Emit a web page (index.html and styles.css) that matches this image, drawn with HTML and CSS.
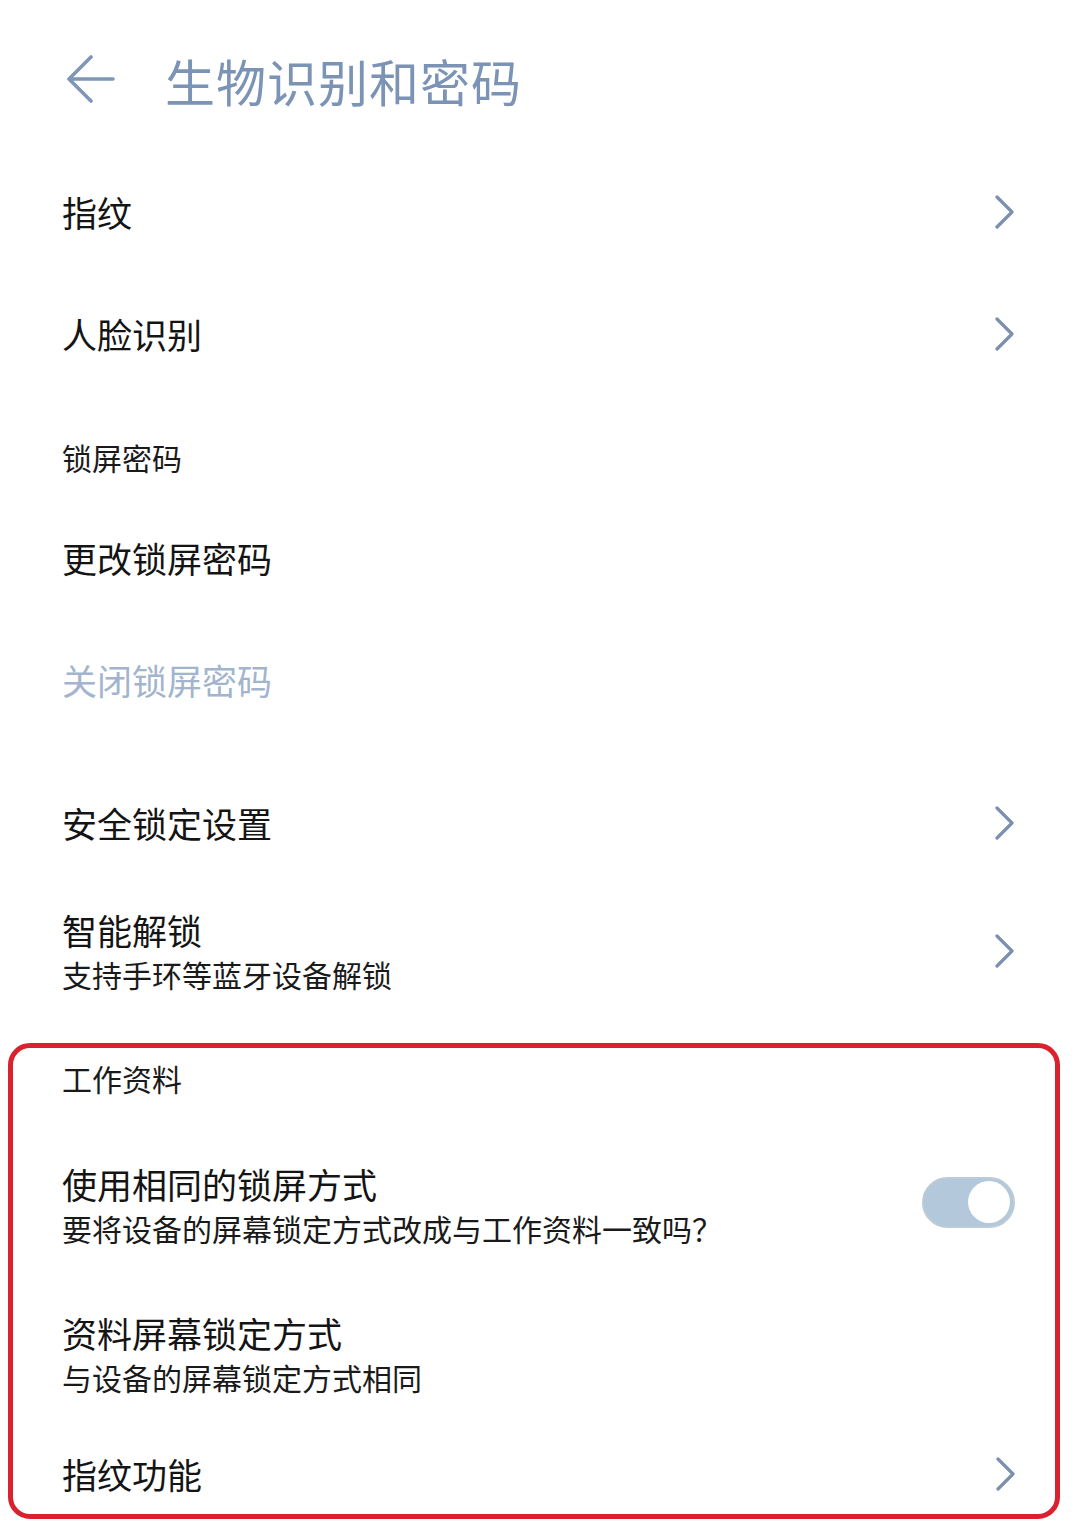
FILE: index.html
```html
<!DOCTYPE html>
<html lang="zh-CN">
<head>
<meta charset="utf-8">
<title>生物识别和密码</title>
<link rel="stylesheet" href="styles.css">
</head>
<body>
<div class="screen">
  <header class="appbar">
    <svg class="back" width="50" height="50" viewBox="0 0 50 50" aria-hidden="true">
      <path d="M3 24 H47 M25 2 L3 24 L25 46" fill="none" stroke="#7f96b8" stroke-width="3.6" stroke-linecap="round" stroke-linejoin="round"/>
    </svg>
    <h1 class="title">生物识别和密码</h1>
  </header>

  <div class="item h-fp">
    <span class="label">指纹</span>
    <svg class="chev" width="20" height="34" viewBox="0 0 20 34" aria-hidden="true"><path d="M3 2 L18 17 L3 32" fill="none" stroke="#7b8fae" stroke-width="3.2" stroke-linecap="round" stroke-linejoin="round"/></svg>
  </div>
  <div class="item h-face">
    <span class="label">人脸识别</span>
    <svg class="chev" width="20" height="34" viewBox="0 0 20 34" aria-hidden="true"><path d="M3 2 L18 17 L3 32" fill="none" stroke="#7b8fae" stroke-width="3.2" stroke-linecap="round" stroke-linejoin="round"/></svg>
  </div>
  <div class="item h-sec1">
    <span class="section">锁屏密码</span>
  </div>
  <div class="item h-change">
    <span class="label">更改锁屏密码</span>
  </div>
  <div class="item h-close">
    <span class="label disabled">关闭锁屏密码</span>
  </div>
  <div class="item h-safe">
    <span class="label">安全锁定设置</span>
    <svg class="chev" width="20" height="34" viewBox="0 0 20 34" aria-hidden="true"><path d="M3 2 L18 17 L3 32" fill="none" stroke="#7b8fae" stroke-width="3.2" stroke-linecap="round" stroke-linejoin="round"/></svg>
  </div>
  <div class="item h-smart">
    <div class="texts">
      <span class="label">智能解锁</span>
      <span class="sub">支持手环等蓝牙设备解锁</span>
    </div>
    <svg class="chev" width="20" height="34" viewBox="0 0 20 34" aria-hidden="true"><path d="M3 2 L18 17 L3 32" fill="none" stroke="#7b8fae" stroke-width="3.2" stroke-linecap="round" stroke-linejoin="round"/></svg>
  </div>

  <div class="work-box">
    <div class="item in h-sec2">
      <span class="section">工作资料</span>
    </div>
    <div class="item in h-same">
      <div class="texts">
        <span class="label">使用相同的锁屏方式</span>
        <span class="sub">要将设备的屏幕锁定方式改成与工作资料一致吗？</span>
      </div>
      <div class="toggle"><div class="knob"></div></div>
    </div>
    <div class="item in h-profile">
      <div class="texts">
        <span class="label">资料屏幕锁定方式</span>
        <span class="sub">与设备的屏幕锁定方式相同</span>
      </div>
    </div>
    <div class="item in h-fpf">
      <span class="label">指纹功能</span>
      <svg class="chev" width="20" height="34" viewBox="0 0 20 34" aria-hidden="true"><path d="M3 2 L18 17 L3 32" fill="none" stroke="#7b8fae" stroke-width="3.2" stroke-linecap="round" stroke-linejoin="round"/></svg>
    </div>
  </div>
</div>
</body>
</html>
```

FILE: styles.css
```css
html, body {
  margin: 0;
  padding: 0;
  background: #ffffff;
}

body {
  font-family: "Noto Sans CJK SC", "Noto Sans", sans-serif;
  color: #141414;
}

.screen {
  width: 1080px;
  height: 1536px;
  overflow: hidden;
}

.appbar {
  height: 160px;
  display: flex;
  align-items: center;
  padding-left: 66px;
  gap: 49px;
}

.back {
  display: block;
  flex: none;
}

.title {
  margin: 0;
  font-size: 50px;
  font-weight: 400;
  line-height: 60px;
  color: #7b93b5;
  letter-spacing: 1px;
}

.item {
  display: flex;
  align-items: center;
  justify-content: space-between;
  padding: 0 66px 0 62px;
  box-sizing: border-box;
}

.item.in {
  padding: 0 40px 0 49px;
}

.texts {
  display: flex;
  flex-direction: column;
}

.label {
  font-size: 35px;
  line-height: 46px;
  color: #141414;
}

.label.disabled {
  color: #a2b5cd;
}

.sub {
  font-size: 30px;
  line-height: 42px;
  color: #1a1a1a;
}

.section {
  font-size: 30px;
  line-height: 42px;
  color: #1a1a1a;
}

.chev {
  display: block;
  flex: none;
}

/* row heights */
.h-fp { height: 104px; }
.h-face { height: 140px; }
.h-sec1 { height: 106px; }
.h-change { height: 96px; }
.h-close { height: 148px; }
.h-safe { height: 138px; }
.h-smart { height: 118px; }

.work-box {
  margin: 33px 0 0 8px;
  width: 1052px;
  height: 476px;
  box-sizing: border-box;
  border: 5px solid #d9222e;
  border-radius: 22px;
}

.h-sec2 { height: 60px; }
.h-same { height: 194px; }
.h-profile { height: 104px; }
.item.in.h-fpf { height: 106px; padding-top: 30px; }

.toggle {
  flex: none;
  width: 93px;
  height: 51px;
  border-radius: 26px;
  background: #b3c8da;
  box-sizing: border-box;
  border: 2px solid #bccbd7;
  display: flex;
  align-items: center;
  justify-content: flex-end;
  padding-right: 3px;
  margin-top: -6px;
}

.knob {
  width: 42px;
  height: 42px;
  border-radius: 50%;
  background: #ffffff;
}
```
